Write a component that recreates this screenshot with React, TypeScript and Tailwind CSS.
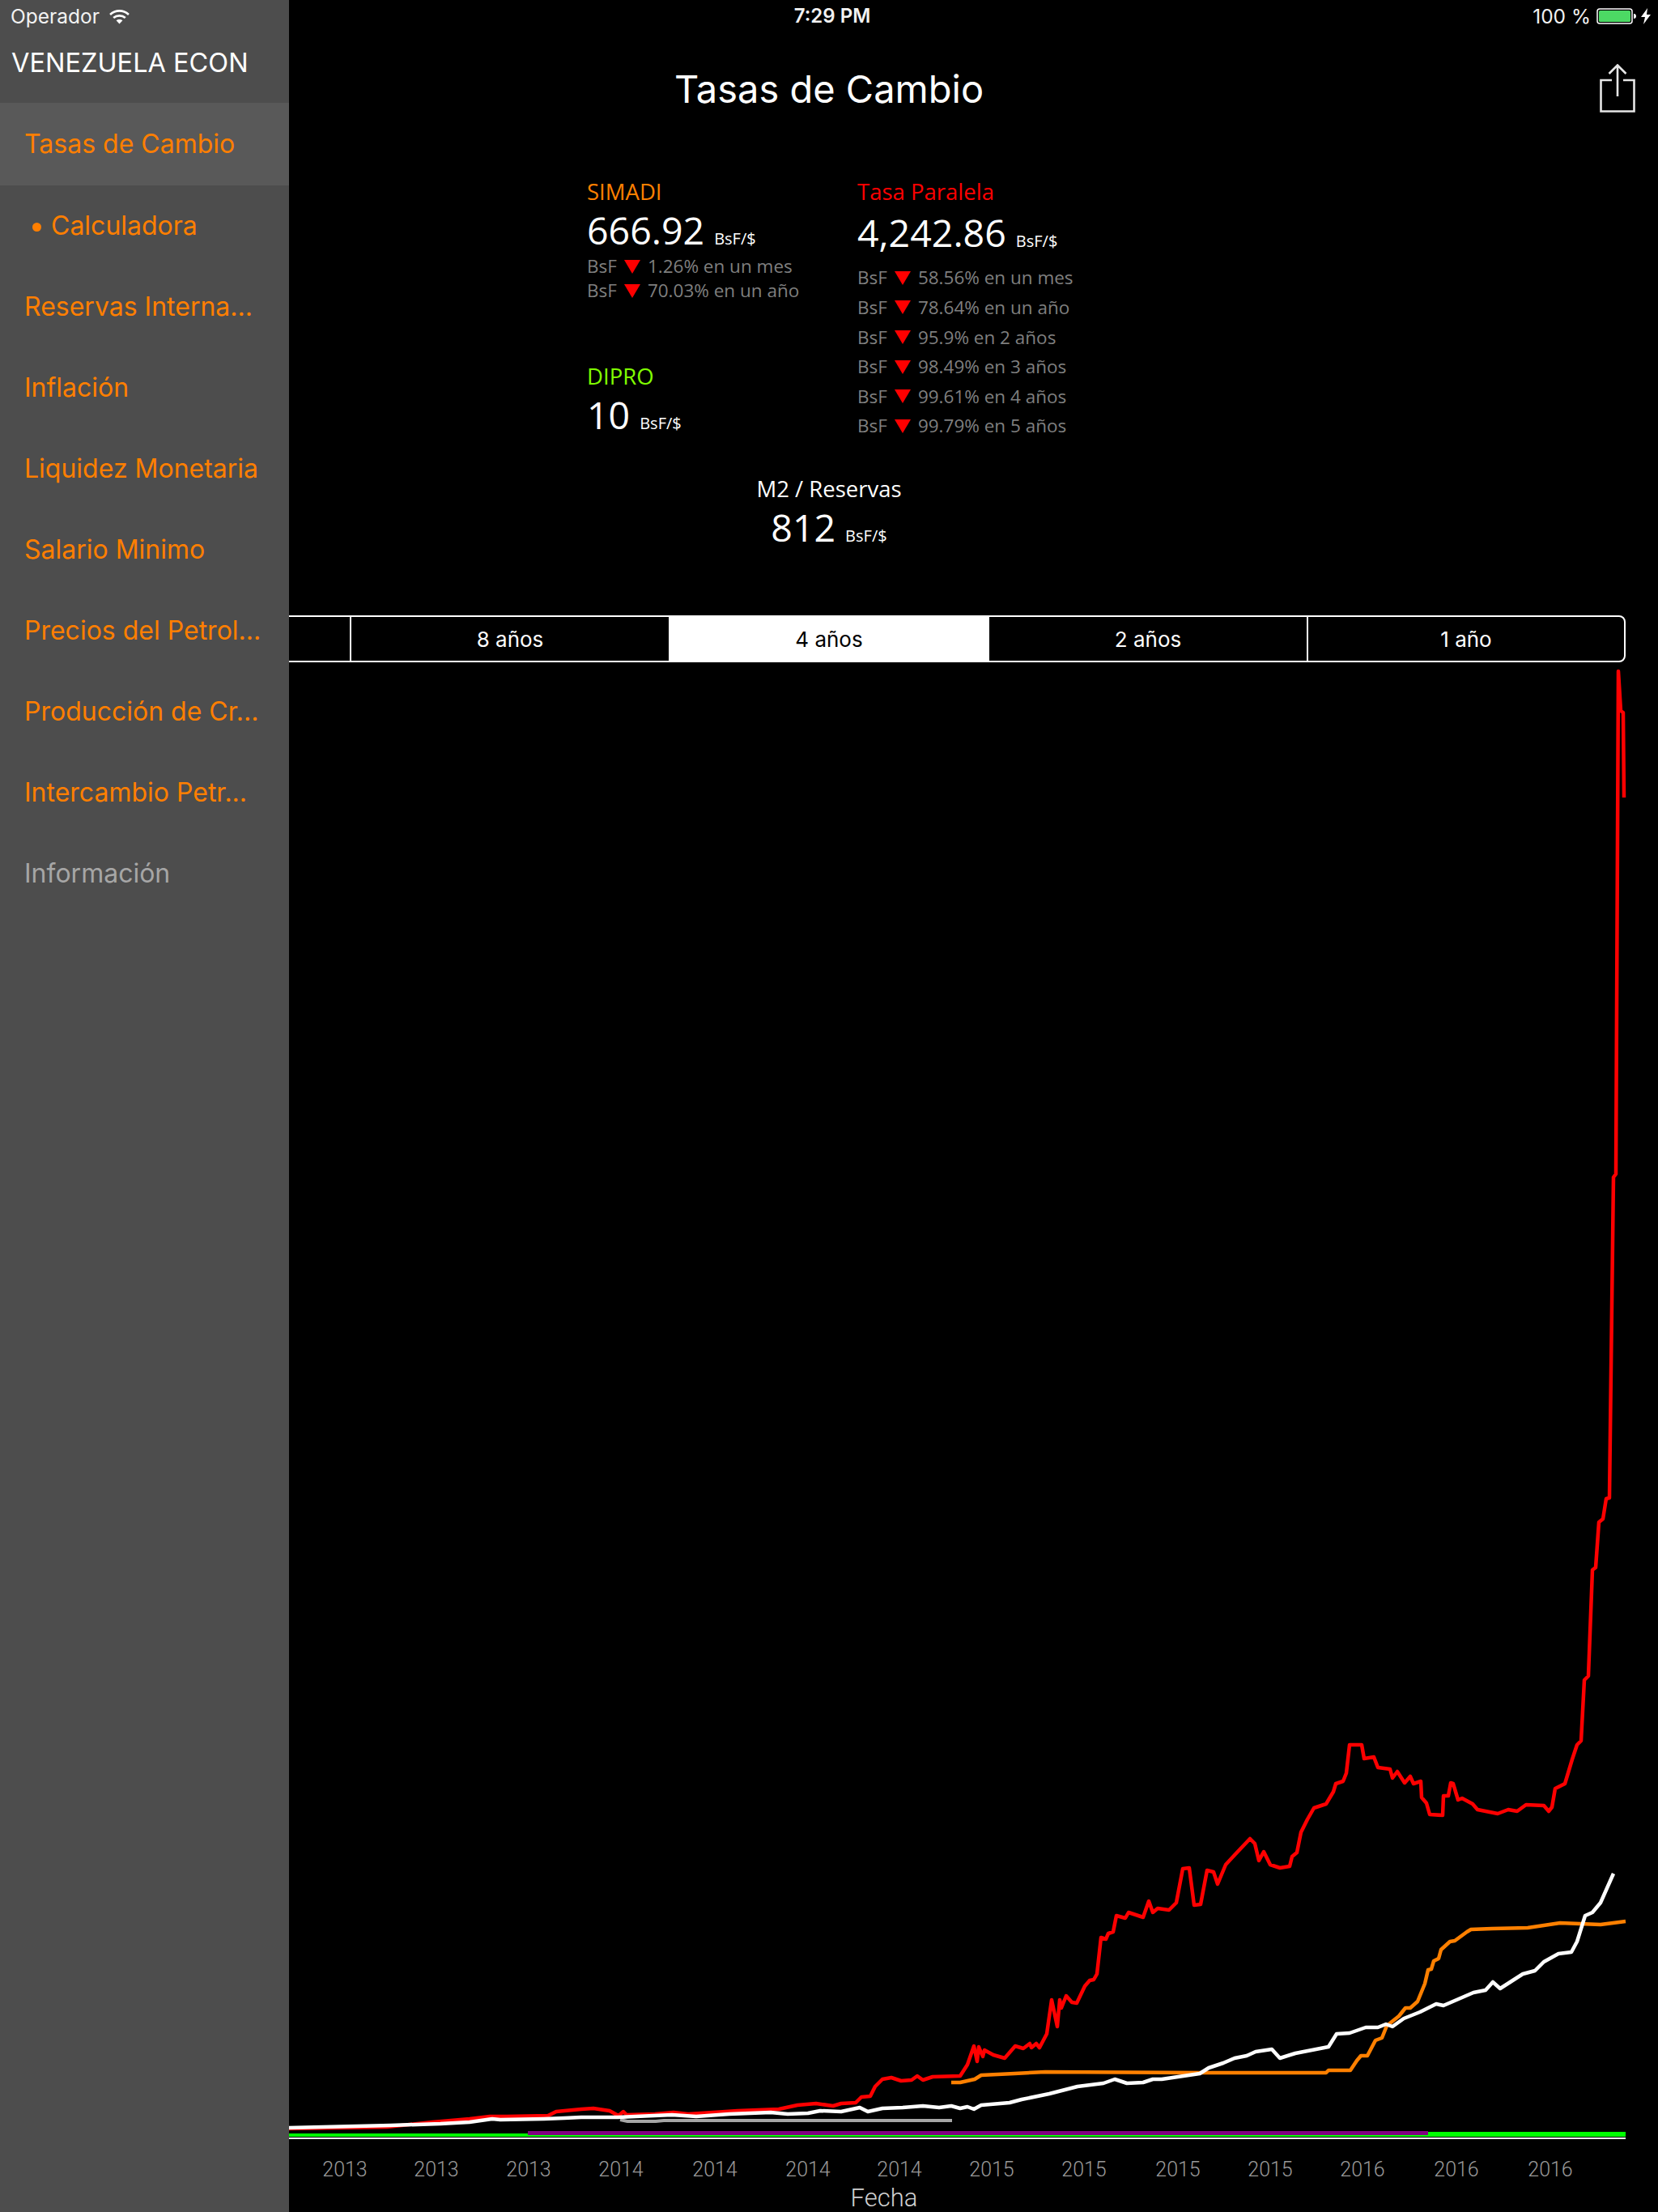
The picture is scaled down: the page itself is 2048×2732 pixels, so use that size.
const RED: [number, number][] = [
  [340, 2630], [357, 2629], [478, 2627], [534, 2621], [580, 2617], [605, 2614], [626, 2614], [677, 2613], [687, 2608], [718, 2605],
  [733, 2604], [753, 2607], [764, 2613], [770, 2608], [774, 2612], [809, 2611], [832, 2609], [850, 2611], [881, 2609], [911, 2607],
  [962, 2605], [985, 2600], [1008, 2598], [1029, 2601], [1039, 2598], [1057, 2597], [1064, 2590], [1075, 2589], [1081, 2577], [1090, 2568],
  [1101, 2566], [1113, 2570], [1126, 2569], [1133, 2564], [1140, 2569], [1152, 2565], [1186, 2564], [1195, 2550], [1203, 2527], [1207, 2546],
  [1209, 2528], [1214, 2540], [1216, 2532], [1227, 2538], [1241, 2542], [1254, 2527], [1264, 2530], [1272, 2524], [1274, 2529], [1280, 2524],
  [1284, 2529], [1293, 2512], [1299, 2470], [1306, 2503], [1309, 2470], [1311, 2480], [1317, 2465], [1324, 2473], [1330, 2474], [1340, 2453],
  [1346, 2446], [1351, 2445], [1355, 2438], [1360, 2393], [1366, 2395], [1369, 2388], [1375, 2386], [1379, 2366], [1390, 2369], [1394, 2362],
  [1412, 2368], [1419, 2348], [1424, 2362], [1430, 2357], [1444, 2359], [1453, 2350], [1461, 2308], [1469, 2307], [1475, 2353], [1483, 2352],
  [1491, 2310], [1499, 2312], [1504, 2327], [1514, 2303], [1526, 2290], [1544, 2271], [1550, 2277], [1555, 2298], [1561, 2287], [1569, 2303],
  [1581, 2307], [1593, 2305], [1596, 2293], [1602, 2288], [1607, 2263], [1615, 2247], [1623, 2233], [1638, 2228], [1647, 2213], [1650, 2203],
  [1659, 2200], [1663, 2190], [1667, 2155], [1682, 2155], [1685, 2172], [1697, 2170], [1702, 2183], [1717, 2185], [1720, 2196], [1726, 2188],
  [1735, 2202], [1742, 2194], [1746, 2203], [1755, 2200], [1756, 2220], [1762, 2227], [1766, 2241], [1782, 2242], [1783, 2218], [1789, 2218],
  [1792, 2202], [1795, 2203], [1801, 2223], [1806, 2221], [1819, 2228], [1825, 2235], [1850, 2240], [1863, 2235], [1874, 2237], [1885, 2229],
  [1907, 2230], [1913, 2237], [1917, 2232], [1921, 2209], [1933, 2203], [1942, 2173], [1948, 2155], [1953, 2150], [1957, 2075], [1962, 2070],
  [1967, 1939], [1971, 1936], [1975, 1880], [1980, 1876], [1984, 1851], [1988, 1850], [1993, 1454], [1996, 1450], [1999, 829], [2002, 878],
  [2005, 880], [2006, 985],
];

const ORANGE: [number, number][] = [
  [1175, 2572], [1186, 2572], [1204, 2568], [1212, 2563], [1253, 2561], [1291, 2559], [1487, 2560], [1638, 2560], [1641, 2557], [1668, 2557],
  [1676, 2545], [1681, 2539], [1689, 2539], [1699, 2520], [1707, 2517], [1713, 2502], [1728, 2490], [1736, 2480], [1742, 2480], [1751, 2472],
  [1760, 2450], [1764, 2433], [1768, 2432], [1771, 2422], [1777, 2419], [1780, 2408], [1791, 2398], [1797, 2397], [1812, 2386], [1817, 2383],
  [1843, 2382], [1887, 2381], [1927, 2375], [1977, 2377], [2008, 2373],
];

const WHITE: [number, number][] = [
  [340, 2628], [357, 2628], [483, 2625], [544, 2623], [580, 2621], [608, 2617], [618, 2618], [672, 2617], [697, 2616], [718, 2615],
  [763, 2615], [830, 2612], [860, 2614], [901, 2611], [952, 2609], [973, 2611], [998, 2610], [1013, 2607], [1039, 2608], [1062, 2603],
  [1072, 2608], [1090, 2604], [1115, 2603], [1140, 2601], [1160, 2603], [1175, 2601], [1186, 2604], [1195, 2602], [1203, 2605], [1212, 2600],
  [1247, 2597], [1262, 2593], [1296, 2586], [1331, 2577], [1363, 2573], [1377, 2568], [1392, 2573], [1412, 2572], [1424, 2568], [1435, 2568],
  [1482, 2561], [1493, 2554], [1511, 2548], [1525, 2542], [1540, 2539], [1551, 2534], [1571, 2531], [1581, 2542], [1600, 2536], [1641, 2528],
  [1651, 2512], [1667, 2511], [1687, 2504], [1702, 2504], [1712, 2500], [1720, 2503], [1734, 2493], [1754, 2485], [1774, 2475], [1783, 2477],
  [1820, 2461], [1835, 2458], [1844, 2448], [1853, 2456], [1881, 2438], [1896, 2434], [1907, 2423], [1925, 2413], [1941, 2411], [1948, 2398],
  [1958, 2366], [1967, 2362], [1977, 2350], [1993, 2314],
];

const TICKS: [number, string][] = [
  [426, '2013'], [539, '2013'], [653, '2013'], [767, '2014'], [883, '2014'], [998, '2014'], [1111, '2014'],
  [1225, '2015'], [1339, '2015'], [1455, '2015'], [1569, '2015'], [1683, '2016'], [1799, '2016'], [1915, '2016'],
];

const NAV = [
  'Calculadora', 'Reservas Interna...', 'Inflación', 'Liquidez Monetaria', 'Salario Minimo',
  'Precios del Petrol...', 'Producción de Cr...', 'Intercambio Petr...',
];

const toPoints = (pts: [number, number][]) => pts.map((p) => p.join(',')).join(' ');

function Change({ text, tall }: { text: string; tall?: boolean }) {
  return (
    <div className={`flex items-center text-[22.5px] text-[#7f7f7f] ${tall ? 'h-[36.6px]' : 'h-[30px]'}`}>
      <span>BsF</span>
      <svg viewBox="0 0 20 17" className="w-[20px] h-[17px] mx-[9px] shrink-0">
        <polygon points="0,0 20,0 10,17" fill="#ff0000" />
      </svg>
      <span>{text}</span>
    </div>
  );
}

function Rate({ value }: { value: string }) {
  return (
    <div className="flex items-baseline mt-[5px] text-white">
      <span className="text-[46.5px] leading-[50px]">{value}</span>
      <span className="text-[20px] leading-none ml-[12px]">BsF/$</span>
    </div>
  );
}

function Sidebar() {
  return (
    <aside className="absolute left-0 top-0 bottom-0 w-[357px] bg-[#4d4d4d] font-['Inter',sans-serif]">
      <div className="h-[127px]">
        <div className="flex items-center h-[40px] pl-[13px] text-[24.5px] text-[#f2f2f2]">
          <span>Operador</span>
          <svg viewBox="0 0 24 18" className="w-[25px] h-[19px] ml-[12px]">
            <path d="M1 6.5C7.5 0.7 16.5 0.7 23 6.5" fill="none" stroke="#fff" strokeWidth="2.6" />
            <path d="M5 10.5C9 7 15 7 19 10.5" fill="none" stroke="#fff" strokeWidth="2.6" />
            <path d="M8.2 13.6C10.4 11.8 13.6 11.8 15.8 13.6L12 17.6Z" fill="#fff" />
          </svg>
        </div>
        <div className="pl-[14px] text-[32.5px] leading-[76px] text-white">VENEZUELA ECON</div>
      </div>
      <div className="flex items-center h-[102px] pl-[30px] bg-[#595959] text-[32px] text-[#ff7f00]">Tasas de Cambio</div>
      {NAV.map((item, i) => (
        <div key={item} className="flex items-center h-[100px] pl-[30px] text-[32px] text-[#ff7f00]">
          {i === 0 && <span className="w-[11px] h-[11px] rounded-full bg-[#ff7f00] ml-[10px] mr-[12px] mt-[3px]" />}
          {item}
        </div>
      ))}
      <div className="flex items-center h-[100px] pl-[30px] text-[32px] text-[#a6a6a6]">Información</div>
    </aside>
  );
}

function StatusBar() {
  return (
    <div className="grid grid-cols-3 items-center h-[40px] text-[24.5px] text-[#f2f2f2] font-['Inter',sans-serif]">
      <div />
      <div className="text-center font-semibold text-[24px] pl-[8px]">7:29 PM</div>
      <div className="flex items-center justify-end pr-[9px]">
        <span>100 %</span>
        <svg viewBox="0 0 50 20" className="w-[50px] h-[20px] ml-[7px]">
          <rect x="1" y="1" width="43" height="18" rx="3" fill="#000" stroke="#fff" strokeWidth="1.5" />
          <rect x="3" y="3" width="39" height="14" rx="1.5" fill="#4cd964" />
          <path d="M46 7c2 0 3 1 3 3s-1 3-3 3z" fill="#fff" />
        </svg>
        <svg viewBox="0 0 12 20" className="w-[12px] h-[20px] ml-[5px]">
          <polygon points="8,0 0,11 5,11 3,20 12,8 7,8" fill="#fff" />
        </svg>
      </div>
    </div>
  );
}

function Chart() {
  return (
    <svg viewBox="0 820 2048 1912" className="block w-full h-[1912px] mt-[2px]">
      <rect x="340" y="2635" width="1668" height="4" fill="#00ff00" />
      <rect x="652" y="2632" width="1112" height="5" fill="#800080" />
      <rect x="1764" y="2633" width="244" height="4" fill="#00ff00" />
      <rect x="340" y="2640" width="1668" height="2" fill="#ffffff" />
      <polyline points="766,2618 775,2620 810,2620 820,2619 1176,2619" fill="none" stroke="#a6a6a6" strokeWidth="4" />
      <polyline points={toPoints(ORANGE)} fill="none" stroke="#ff8000" strokeWidth="4.5" strokeLinejoin="round" />
      <polyline points={toPoints(RED)} fill="none" stroke="#ff0000" strokeWidth="4.5" strokeLinejoin="round" />
      <polyline points={toPoints(WHITE)} fill="none" stroke="#ffffff" strokeWidth="4.5" strokeLinejoin="round" />
      {TICKS.map(([x, label]) => (
        <text key={x} x={x} y="2688" textAnchor="middle" fontSize="25" fontWeight="300" fill="#999999" fontFamily="'Roboto',sans-serif">
          {label}
        </text>
      ))}
      <text x="1092" y="2725" textAnchor="middle" fontSize="31" fontWeight="300" fill="#d0d0d0" fontFamily="'Roboto',sans-serif">
        Fecha
      </text>
    </svg>
  );
}

export default function App() {
  return (
    <div className="relative w-[2048px] h-[2732px] overflow-hidden bg-black">
      <StatusBar />

      <div className="grid grid-cols-[1fr_auto_1fr] items-center h-[140px] font-['Inter',sans-serif]">
        <div />
        <h1 className="text-[47px] text-white">Tasas de Cambio</h1>
        <svg viewBox="0 0 44 60" className="justify-self-end w-[44px] h-[60px] mr-[28px] mt-[-2px]">
          <path d="M15 20H1.5V58.5H42.5V20H29" fill="none" stroke="#e6e6e6" strokeWidth="2.6" />
          <path d="M22 1V40M11.5 12L22 1.5L32.5 12" fill="none" stroke="#e6e6e6" strokeWidth="2.6" />
        </svg>
      </div>

      <div className="font-['Open_Sans',sans-serif]">
        <div className="flex pl-[725px] pt-[40px] h-[400px]">
          <div className="w-[334px]">
            <div className="text-[27.5px] leading-[34px] text-[#ff8000]">SIMADI</div>
            <Rate value="666.92" />
            <div className="mt-[5px]">
              <Change text="1.26% en un mes" />
              <Change text="70.03% en un año" />
            </div>
            <div className="mt-[74px] text-[27.5px] leading-[34px] text-[#80ff00]">DIPRO</div>
            <Rate value="10" />
          </div>
          <div>
            <div className="text-[27.5px] leading-[34px] text-[#ff0000]">Tasa Paralela</div>
            <div className="mt-[8px]"><Rate value="4,242.86" /></div>
            <div className="mt-[13px]">
              <Change tall text="58.56% en un mes" />
              <Change tall text="78.64% en un año" />
              <Change tall text="95.9% en 2 años" />
              <Change tall text="98.49% en 3 años" />
              <Change tall text="99.61% en 4 años" />
              <Change tall text="99.79% en 5 años" />
            </div>
          </div>
        </div>
        <div className="flex flex-col items-center h-[180px] mt-[7px] -mb-[17px]">
          <div className="text-[27.5px] leading-[34px] text-white">M2 / Reservas</div>
          <Rate value="812" />
        </div>
      </div>

      <div className="ml-[38px] mr-[40px] flex h-[58px] mt-[10px] border-2 border-white rounded-[8px] overflow-hidden text-[26px] text-white font-['Inter',sans-serif]">
        <div className="flex-1 border-r-2 border-white" />
        <div className="w-[392px] flex items-center justify-center">8 años</div>
        <div className="w-[396px] flex items-center justify-center bg-white text-black">4 años</div>
        <div className="w-[394px] flex items-center justify-center border-r-2 border-white">2 años</div>
        <div className="w-[390px] flex items-center justify-center">1 año</div>
      </div>

      <Chart />
      <Sidebar />
    </div>
  );
}
